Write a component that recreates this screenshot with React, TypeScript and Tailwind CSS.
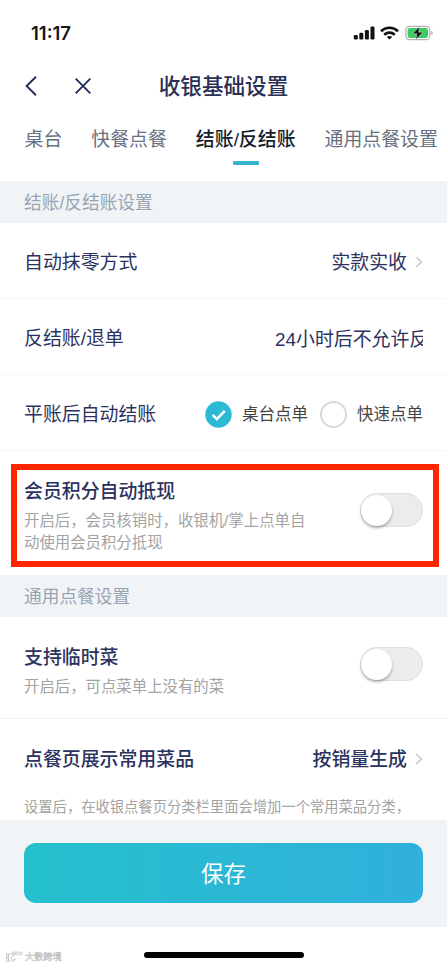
import React, { useState } from "react";

interface SwitchProps {
  checked: boolean;
  onChange: () => void;
}

const Switch: React.FC<SwitchProps> = ({ checked, onChange }) => (
  <button
    role="switch"
    aria-checked={checked}
    onClick={onChange}
    className={`flex h-[34px] w-[63px] shrink-0 items-center rounded-full border-[1.5px] border-[#dfdfdf] ${
      checked ? "justify-end bg-[#2bb9d3]" : "justify-start bg-[#ececec]"
    }`}
  >
    <span className="h-[31px] w-[31px] rounded-full bg-white shadow-[0_2px_3px_rgba(0,0,0,0.3)]" />
  </button>
);

const Chevron = () => (
  <svg className="mb-[3px] ml-2 h-3 w-2 shrink-0" viewBox="0 0 8 12" fill="none" stroke="#c9c9cb" strokeWidth="1.6">
    <path d="M1.2 1 6.4 6 1.2 11" />
  </svg>
);

const StatusBar = () => (
  <div className="flex h-[60px] items-center justify-between pt-[6px] pr-[14px] pl-[31px]">
    <span className="font-[Inter] text-[18.5px] font-semibold text-[#161616]">11:17</span>
    <div className="flex items-center">
      {/* signal */}
      <svg width="22" height="14" viewBox="0 0 22 14" fill="#111">
        <rect x="0.8" y="9" width="4" height="4.5" rx="1.2" />
        <rect x="6.3" y="6.8" width="4" height="6.7" rx="1.2" />
        <rect x="11.9" y="4" width="4" height="9.5" rx="1.2" />
        <rect x="17.5" y="0.6" width="4" height="12.9" rx="1.2" />
      </svg>
      {/* wifi */}
      <svg className="ml-[5px]" width="19" height="14" viewBox="0 0 19 14" fill="none" stroke="#111" strokeWidth="2.6">
        <path d="M1 5.2C5.8.6 13.2.6 18 5.2" />
        <path d="M4.2 8.7c3-2.8 7.6-2.8 10.6 0" />
        <path d="M9.5 13.6 6.8 11.1c1.5-1.4 3.9-1.4 5.4 0Z" fill="#111" stroke="none" />
      </svg>
      {/* battery */}
      <svg className="ml-[6px]" width="28" height="16" viewBox="0 0 28 16">
        <rect x="0.8" y="1.3" width="24" height="13.4" rx="4" fill="#fff" stroke="#b5b5b5" strokeWidth="1.3" />
        <rect x="2.6" y="3.1" width="20.4" height="9.8" rx="2.3" fill="#3ccb5f" />
        <path d="M26.3 6v4c1-.4 1.4-1.2 1.4-2s-.4-1.6-1.4-2Z" fill="#aaa" />
        <path d="M14.6 1.6 7.6 8.7h4.3l-1 5.7 7-7.2h-4.3Z" fill="#111" stroke="#fff" strokeWidth="0.4" />
      </svg>
    </div>
  </div>
);

const NavBar = () => (
  <div className="grid h-[52px] grid-cols-[1fr_auto_1fr] items-center">
    <div className="flex items-center pl-[25px]">
      <svg width="12" height="20" viewBox="0 0 12 20" fill="none" stroke="#252e5b" strokeWidth="1.9">
        <path d="M11 .8 1.6 10 11 19.2" />
      </svg>
      <svg className="ml-[38px]" width="16" height="16" viewBox="0 0 16 16" fill="none" stroke="#252e5b" strokeWidth="1.9">
        <path d="m.7.7 14.6 14.6M15.3.7.7 15.3" />
      </svg>
    </div>
    <h1 className="pt-px text-[21.6px] font-medium text-[#2a3154]">收银基础设置</h1>
  </div>
);

const tabs = ["桌台", "快餐点餐", "结账/反结账", "通用点餐设置"];

const SectionTitle = ({ children }: { children: React.ReactNode }) => (
  <div className="flex h-[42px] items-center bg-[#f0f4f6] pt-1 pl-6 text-[17.7px] text-[#98a4b3]">{children}</div>
);

const App = () => {
  const [activeTab, setActiveTab] = useState("结账/反结账");
  const [orderType, setOrderType] = useState("桌台点单");
  const [pointsDeduct, setPointsDeduct] = useState(false);
  const [tempDish, setTempDish] = useState(false);

  return (
    <div className="flex h-[968px] w-[447px] flex-col overflow-hidden bg-white font-['Liberation_Sans','Noto_Sans_CJK_SC',sans-serif] leading-none whitespace-nowrap text-[#2b3260]">
      <StatusBar />
      <NavBar />

      {/* Tabs */}
      <div className="flex h-[69px] gap-[29px] pt-[18px] pl-[24.5px]">
        {tabs.map((tab) => (
          <button
            key={tab}
            onClick={() => setActiveTab(tab)}
            className={`flex shrink-0 flex-col items-center text-[18.9px] leading-5 ${
              activeTab === tab ? "font-medium text-[#151d2b]" : "text-[#66707f]"
            }`}
          >
            {tab}
            {activeTab === tab && <span className="mt-[11px] h-[4px] w-[26px] rounded-[1px] bg-[#35b4d1]" />}
          </button>
        ))}
      </div>

      <SectionTitle>结账/反结账设置</SectionTitle>

      <div className="flex h-[76px] items-center justify-between border-b border-[#f5f6f7] px-6 pt-1.5 text-[18.9px]">
        <span>自动抹零方式</span>
        <span className="flex items-center">
          实款实收
          <Chevron />
        </span>
      </div>

      <div className="flex h-[76px] items-center justify-between border-b border-[#f5f6f7] px-6 pt-1.5 text-[18.9px]">
        <span>反结账/退单</span>
        <span className="w-[148px] overflow-hidden leading-7">24小时后不允许反</span>
      </div>

      <div className="flex h-[76px] items-center border-b border-[#f5f6f7] px-6 pt-1 text-[18.9px]">
        <span className="pt-0.5">平账后自动结账</span>
        <div className="ml-auto flex items-center gap-3 text-[16.5px] text-[#444]">
          {["桌台点单", "快速点单"].map((type) => (
            <button key={type} onClick={() => setOrderType(type)} className="flex items-center gap-[10px]">
              {orderType === type ? (
                <svg width="27" height="27" viewBox="0 0 27 27" fill="none">
                  <circle cx="13.5" cy="13.5" r="13.2" fill="#2bb9d3" />
                  <path d="m7.6 13.9 4.2 4.2 8-8.2" stroke="#fff" strokeWidth="2.6" />
                </svg>
              ) : (
                <span className="h-[27px] w-[27px] rounded-full border-2 border-[#d8d8d8]" />
              )}
              <span className="pb-px">{type}</span>
            </button>
          ))}
        </div>
      </div>

      {/* Member points, highlighted */}
      <div className="relative flex h-[124px] items-start justify-between px-6">
        <div className="pt-8">
          <div className="text-[18.9px] font-medium">会员积分自动抵现</div>
          <p className="mt-2 w-[290px] text-[15.4px] leading-[22px] whitespace-normal text-[#a3a3a3]">
            开启后，会员核销时，收银机/掌上点单自动使用会员积分抵现
          </p>
        </div>
        <div className="pt-[42px]">
          <Switch checked={pointsDeduct} onChange={() => setPointsDeduct(!pointsDeduct)} />
        </div>
        <div className="pointer-events-none absolute top-[13px] right-[8px] bottom-[8px] left-[11px] border-[6.5px] border-[#fe2600]" />
      </div>

      <SectionTitle>通用点餐设置</SectionTitle>

      <div className="flex h-[102px] items-start justify-between border-b border-[#eef4f5] px-6">
        <div className="pt-8">
          <div className="text-[18.9px] font-medium">支持临时菜</div>
          <p className="mt-2 text-[15.4px] leading-[22px] text-[#a3a3a3]">开启后，可点菜单上没有的菜</p>
        </div>
        <div className="pt-[30px]">
          <Switch checked={tempDish} onChange={() => setTempDish(!tempDish)} />
        </div>
      </div>

      <div className="h-[101px] px-6 pt-8">
        <div className="flex items-center justify-between text-[18.9px] font-medium">
          <span>点餐页展示常用菜品</span>
          <span className="flex items-center">
            按销量生成
            <Chevron />
          </span>
        </div>
        <p className="mt-[26px] text-[14.3px] leading-[22px] text-[#a3a3a3]">
          设置后，在收银点餐页分类栏里面会增加一个常用菜品分类，
        </p>
      </div>

      {/* Save */}
      <div className="h-[107px] bg-[#f0f4f6] px-6 pt-[23px]">
        <button className="h-[60px] w-full rounded-[12px] bg-linear-to-r from-[#24c0cc] to-[#30b0dc] pt-1 text-[22.5px] text-white">
          保存
        </button>
      </div>

      {/* Watermark and home indicator */}
      <div className="grid h-[41px] grid-cols-[1fr_160px_1fr] items-start">
        <div className="flex items-center gap-[2px] pt-[24px] pl-[6px]">
          <svg width="17" height="12" viewBox="0 0 17 12" fill="none" stroke="#bdbdbd" strokeWidth="0.8">
            <path d="M.6 2.5h1.8v8H.6ZM8.5 3.2a4 4 0 1 0 1.2 4.3M8.4 5.2a2 2 0 1 0 .2 3" />
            <circle cx="8" cy="2.4" r="1.6" />
            <circle cx="11.5" cy="2.4" r="1.6" />
            <circle cx="15" cy="2.4" r="1.4" />
          </svg>
          <span className="pt-0.5 text-[9.2px] text-white [-webkit-text-stroke:0.5px_#bdbdbd]">大数跨境</span>
        </div>
        <div className="mt-[25px] h-[6px] rounded-full bg-black" />
      </div>
    </div>
  );
};

export default App;
